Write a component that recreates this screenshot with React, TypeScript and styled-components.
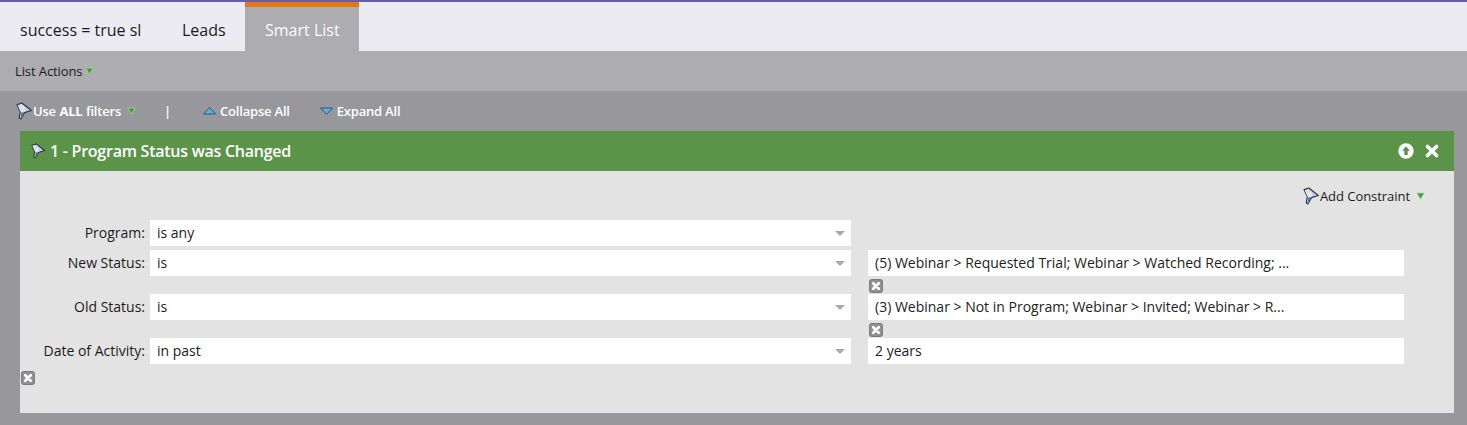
import React from "react";
import styled, { createGlobalStyle } from "styled-components";

const Global = createGlobalStyle`
  html, body { margin: 0; padding: 0; background: #98979c; }
  body { font-family: "Open Sans", "Liberation Sans", sans-serif; }
`;

const Page = styled.div`
  width: 1467px;
  height: 425px;
  overflow: hidden;
  display: flex;
  flex-direction: column;
  border-top: 2px solid #6a5ba8;
  box-sizing: border-box;
`;
const TabBar = styled.div`
  height: 49px;
  flex: none;
  display: flex;
  background: #ecebf2;
`;
const Tab = styled.div<{ $active?: boolean; $w: number; $pl: number }>`
  width: ${(p) => p.$w}px;
  padding-left: ${(p) => p.$pl}px;
  box-sizing: border-box;
  font-size: 16px;
  line-height: ${(p) => (p.$active ? 46 : 56)}px;
  color: ${(p) => (p.$active ? "#fbfbfb" : "#1c1c1c")};
  background: ${(p) => (p.$active ? "#adacb1" : "transparent")};
  border-top: ${(p) => (p.$active ? "5px solid #e2780f" : "0")};
  white-space: nowrap;
`;
const ActionBar = styled.div`
  height: 40px;
  flex: none;
  display: flex;
  align-items: center;
  padding-left: 15px;
  background: #adacb1;
  font-size: 13px;
  color: #1c1c1c;
  letter-spacing: -0.1px;
`;
const FilterArea = styled.div`
  flex: 1;
  background: #98979c;
  padding: 0 13px 0 20px;
  display: flex;
  flex-direction: column;
`;
const FilterBar = styled.div`
  height: 40px;
  flex: none;
  display: flex;
  align-items: center;
  margin-left: -5px;
  font-size: 13px;
  font-weight: 600;
  color: #fff;
  letter-spacing: -0.2px;
`;
const BarItem = styled.span<{ $ml?: number }>`
  display: inline-flex;
  align-items: center;
  margin-left: ${(p) => p.$ml ?? 0}px;
  white-space: nowrap;
  b { font-weight: 700; margin: 0 3.5px; }
`;
const BarLabel = styled.span`
  margin-left: 4px;
`;
const Card = styled.div`
  display: flex;
  flex-direction: column;
  height: 282px;
`;
const CardHeader = styled.div`
  height: 40px;
  flex: none;
  display: flex;
  align-items: center;
  background: #5b9349;
  padding: 0 14px 0 10px;
  color: #fff;
  font-size: 16px;
  font-weight: 600;
`;
const CardTitle = styled.span`
  margin-left: 4px;
  flex: 1;
  letter-spacing: -0.25px;
`;
const HeaderIcons = styled.div`
  display: flex;
  align-items: center;
  gap: 11px;
  margin-left: -3px;
  padding-right: 1px;
`;
const CardBody = styled.div`
  flex: 1;
  background: #e3e3e3;
  padding-top: 15px;
`;
const ConstraintRow = styled.div`
  display: flex;
  justify-content: flex-end;
  align-items: center;
  height: 20px;
  padding-right: 29px;
  font-size: 13px;
  color: #1c1c1c;
  letter-spacing: -0.05px;
  margin-bottom: 14px;
`;
const Row = styled.div<{ $h: number }>`
  display: grid;
  grid-template-columns: 125px 701px 548px;
  column-gap: 5px;
  height: ${(p) => p.$h}px;
  align-items: start;
`;
const Label = styled.div`
  height: 26px;
  line-height: 26px;
  text-align: right;
  font-size: 14px;
  color: #1c1c1c;
  white-space: nowrap;
`;
const Field = styled.div`
  height: 26px;
  line-height: 26px;
  background: #fff;
  padding: 0 7px;
  box-sizing: border-box;
  font-size: 14px;
  color: #222;
  display: flex;
  align-items: center;
  justify-content: space-between;
  white-space: nowrap;
`;
const ValueCol = styled.div`
  margin-left: 12px;
  display: flex;
  flex-direction: column;
`;
const Caret = styled.span`
  width: 0;
  height: 0;
  margin-right: -1px;
  border-left: 5px solid transparent;
  border-right: 5px solid transparent;
  border-top: 5px solid #a9a9a9;
`;
const DeleteBox = styled.span`
  width: 14px;
  height: 14px;
  margin: 3px 0 0 1px;
  display: block;
  line-height: 0;
`;
const BottomDelete = styled.div`
  padding: 7px 0 0 1px;
  line-height: 0;
`;
const GreenCaretWrap = styled.span<{ $ml: number }>`
  display: inline-flex;
  margin-left: ${(p) => p.$ml}px;
`;

const Funnel = ({ size = 18 }: { size?: number }) => (
  <svg width={size} height={size} viewBox="0 0 17 17">
    <path d="M2 2.5 L6.5 1 L15.5 8 L9 10 L5.5 16 L4 15 L5 9 Z" fill="#c3cfdc" stroke="#2b3648" strokeWidth="1.1" strokeLinejoin="round" />
    <path d="M3.2 3 L6 9.3 M5.5 2.5 L7.5 9.3 M8 4 L9 9" stroke="#f4f7fa" strokeWidth="1" fill="none" />
    <path d="M6 10 L9 10 L5.5 15.5 Z" fill="#5d7088" />
  </svg>
);
const GreenCaret = () => (
  <svg width="9" height="8" viewBox="0 0 9 8">
    <path d="M0.7 1 H8.3 L4.5 7.3 Z" fill="#4a9c3a" stroke="#b9dbad" strokeWidth="0.7" strokeLinejoin="round" />
  </svg>
);
const Triangle = ({ up }: { up?: boolean }) => (
  <svg width="13" height="8" viewBox="0 0 13 8">
    {up ? (
      <path d="M6.5 0.7 L12.5 7 H0.5 Z" fill="#6ba9d8" stroke="#1f5b8c" strokeWidth="1" />
    ) : (
      <path d="M0.5 1 H12.5 L6.5 7.3 Z" fill="#6ba9d8" stroke="#1f5b8c" strokeWidth="1" />
    )}
  </svg>
);
const UpCircle = () => (
  <svg width="16" height="16" viewBox="0 0 16 16">
    <circle cx="8" cy="8" r="7.7" fill="#fff" />
    <path d="M8 3.4 L12 7.8 H9.7 V12 H6.3 V7.8 H4 Z" fill="#5b9349" />
  </svg>
);
const CloseX = () => (
  <svg width="14" height="14" viewBox="0 0 14 14">
    <path d="M2.5 2.5 L11.5 11.5 M11.5 2.5 L2.5 11.5" stroke="#fff" strokeWidth="3.6" strokeLinecap="round" />
  </svg>
);
const DeleteIcon = () => (
  <svg width="14" height="14" viewBox="0 0 14 14">
    <rect x="0.5" y="0.5" width="13" height="13" rx="2" fill="#8f8f8f" stroke="#7a7a7a" />
    <path d="M4.2 4.2 L9.8 9.8 M9.8 4.2 L4.2 9.8" stroke="#fff" strokeWidth="2.8" strokeLinecap="round" />
  </svg>
);

const Select = ({ children }: { children: React.ReactNode }) => (
  <Field>
    {children}
    <Caret />
  </Field>
);

export default function App() {
  return (
    <Page>
      <Global />
      <TabBar>
        <Tab $w={162} $pl={20}>success = true sl</Tab>
        <Tab $w={83} $pl={20}>Leads</Tab>
        <Tab $active $w={114} $pl={20}>Smart List</Tab>
      </TabBar>
      <ActionBar>
        List Actions
        <GreenCaretWrap $ml={3}><GreenCaret /></GreenCaretWrap>
      </ActionBar>
      <FilterArea>
        <FilterBar>
          <BarItem>
            <Funnel />
            Use<b>ALL</b>filters
            <GreenCaretWrap $ml={6}><GreenCaret /></GreenCaretWrap>
          </BarItem>
          <BarItem $ml={28}>|</BarItem>
          <BarItem $ml={32}>
            <Triangle up />
            <BarLabel>Collapse All</BarLabel>
          </BarItem>
          <BarItem $ml={30}>
            <Triangle />
            <BarLabel>Expand All</BarLabel>
          </BarItem>
        </FilterBar>
        <Card>
          <CardHeader>
            <Funnel size={16} />
            <CardTitle>1 - Program Status was Changed</CardTitle>
            <HeaderIcons>
              <UpCircle />
              <CloseX />
            </HeaderIcons>
          </CardHeader>
          <CardBody>
            <ConstraintRow>
              <Funnel />
              Add Constraint
              <GreenCaretWrap $ml={6}><GreenCaret /></GreenCaretWrap>
            </ConstraintRow>
            <Row $h={30}>
              <Label>Program:</Label>
              <Select>is any</Select>
            </Row>
            <Row $h={44}>
              <Label>New Status:</Label>
              <Select>is</Select>
              <ValueCol>
                <Field>(5) Webinar &gt; Requested Trial; Webinar &gt; Watched Recording; ...</Field>
                <DeleteBox><DeleteIcon /></DeleteBox>
              </ValueCol>
            </Row>
            <Row $h={44}>
              <Label>Old Status:</Label>
              <Select>is</Select>
              <ValueCol>
                <Field>(3) Webinar &gt; Not in Program; Webinar &gt; Invited; Webinar &gt; R...</Field>
                <DeleteBox><DeleteIcon /></DeleteBox>
              </ValueCol>
            </Row>
            <Row $h={26}>
              <Label>Date of Activity:</Label>
              <Select>in past</Select>
              <ValueCol>
                <Field>2 years</Field>
              </ValueCol>
            </Row>
            <BottomDelete><DeleteIcon /></BottomDelete>
          </CardBody>
        </Card>
      </FilterArea>
    </Page>
  );
}
